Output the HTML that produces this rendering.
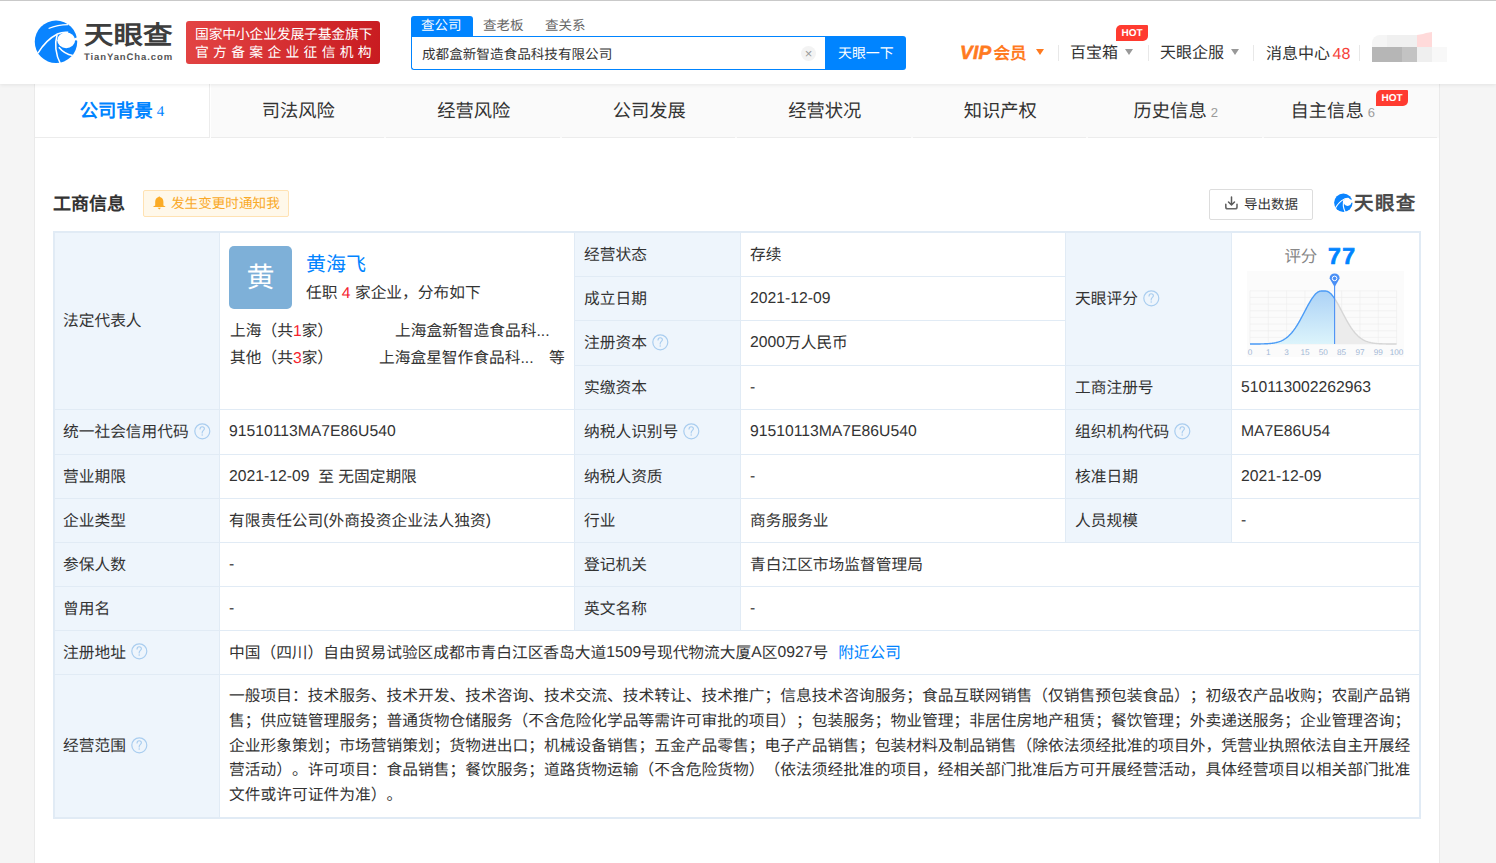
<!DOCTYPE html>
<html lang="zh-CN"><head><meta charset="utf-8">
<style>
*{box-sizing:border-box;margin:0;padding:0}
html,body{width:1496px;height:863px;overflow:hidden}
body{position:relative;text-rendering:geometricPrecision;text-spacing-trim:space-all;background:#f5f5f5;font-family:"Liberation Sans",sans-serif;color:#333}
.a{position:absolute;white-space:nowrap}
#hdr{position:absolute;left:0;top:0;width:1496px;height:84px;background:#fff;box-shadow:0 1px 4px rgba(0,0,0,.08);z-index:2}
#topline{position:absolute;left:0;top:0;width:1496px;height:1px;background:#c9c9c9;z-index:3}
#card{position:absolute;left:34px;top:84px;width:1406px;height:800px;background:#fff;border-left:1px solid #eaeaea;border-right:1px solid #eaeaea}
.tab{position:absolute;top:84px;height:54px;background:#fafafa;font-size:18.3px;padding-bottom:2px;color:#333;display:flex;align-items:center;justify-content:center}
.tab::after{content:"";position:absolute;left:0;right:2px;top:53px;height:1px;background:#ececec}
.tab.on{background:#fff;border-right:1px solid #ececec;color:#0084ff;font-weight:bold}
.tab.on::after{right:0}
.tab.on sup{color:#0084ff;font-family:"Liberation Serif",serif;font-size:15px}
.tab sup{font-size:13px;color:#999;font-weight:normal;margin-left:4px;vertical-align:baseline;position:relative;top:2px}
.hot{position:absolute;background:#ff3b30;color:#fff;font-size:10px;font-weight:bold;line-height:18px;text-align:center;border-radius:5px 1px 5px 0}
#tbl{position:absolute;left:53px;top:231px;width:1368px;height:588px;background:#e1ebf5}
.c{position:absolute;background:#fff;display:flex;align-items:center;padding-left:9px;font-size:15.72px;color:#333;white-space:nowrap}
.c.l{background:#eef5fc}
.k{position:relative;top:-1.5px}
.lt{position:relative;top:-2.2px}
.q{display:block;flex:none;margin-left:5px;position:relative;top:-1px}
</style></head><body>
<div id="topline"></div>
<div id="hdr">
  <!-- logo -->
  <svg class="a" style="left:30px;top:15px" width="55" height="55" viewBox="0 0 863 863">
    <circle cx="408" cy="421" r="333" fill="#0a84ff"/>
    <ellipse cx="568" cy="398" rx="140" ry="122" fill="#fff"/>
    <path d="M650,385 L790,330 L790,402 L735,402 Z" fill="#fff"/>
    <path d="M560,110 Q680,150 720,250 L760,250 L760,60 Z" fill="#fff"/>
    <path d="M125,598 Q250,390 430,298 Q510,262 600,272" stroke="#fff" stroke-width="24" fill="none"/>
    <path d="M292,212 Q430,152 600,150" stroke="#fff" stroke-width="20" fill="none"/>
    <path d="M425,310 Q360,540 480,770" stroke="#fff" stroke-width="24" fill="none"/>
    <path d="M452,505 Q540,612 670,636" stroke="#fff" stroke-width="24" fill="none"/>
  </svg>
  <div class="a" style="left:84px;top:18px;font-size:29.5px;font-weight:bold;color:#3d3d3d;line-height:34px;transform:scaleY(0.87);transform-origin:0 28px">天眼查</div>
  <div class="a" style="left:84px;top:52.5px;font-size:9.5px;font-weight:bold;color:#555;letter-spacing:0.9px;line-height:10px">TianYanCha.com</div>
  <div class="a" style="left:186px;top:21px;width:194px;height:43px;border-radius:3px;background:linear-gradient(100deg,#e34444,#c81b20)"></div>
  <div class="a" style="left:195px;top:25.5px;font-size:13.8px;letter-spacing:-0.16px;color:#fff;line-height:18px">国家中小企业发展子基金旗下</div>
  <div class="a" style="left:195px;top:44px;font-size:13.8px;color:#fff;line-height:18px;letter-spacing:4.3px">官方备案企业征信机构</div>

  <!-- search -->
  <div class="a" style="left:411px;top:16px;width:62px;height:21px;background:#0084ff;border-radius:3px 3px 0 0"></div>
  <div class="a" style="left:421px;top:17px;font-size:13.5px;color:#fff;line-height:18px">查公司</div>
  <div class="a" style="left:483px;top:17px;font-size:13.5px;color:#666;line-height:18px">查老板</div>
  <div class="a" style="left:545px;top:17px;font-size:13.5px;color:#666;line-height:18px">查关系</div>
  <div class="a" style="left:411px;top:36px;width:415px;height:34px;border:1px solid #0084ff;border-right:none;border-radius:0 0 0 3px;background:#fff"></div>
  <div class="a" style="left:422px;top:44.5px;font-size:13.6px;color:#333;line-height:20px">成都盒新智造食品科技有限公司</div>
  <div class="a" style="left:801px;top:46px;width:15px;height:15px;border-radius:50%;background:#f3f3f3;color:#999;font-size:13px;line-height:15px;text-align:center">×</div>
  <div class="a" style="left:825px;top:36px;width:81px;height:34px;background:#0084ff;border-radius:0 3px 3px 0"></div>
  <div class="a" style="left:838px;top:43px;font-size:13.9px;color:#fff;line-height:20px">天眼一下</div>

  <!-- right nav -->
  <div class="a" style="left:960px;top:42.5px;font-size:17px;color:#ff7a1f;font-weight:bold;line-height:22px"><i style="font-style:italic;font-size:19px;letter-spacing:0.3px;-webkit-text-stroke:0.6px #ff7a1f">VIP</i><span style="font-size:16.5px;margin-left:2px">会员</span></div>
  <div class="a" style="left:1036px;top:49px;width:0;height:0;border-left:4.5px solid transparent;border-right:4.5px solid transparent;border-top:6px solid #ff7a1f"></div>
  <div class="a" style="left:1058px;top:45px;width:1px;height:16px;background:#e8e8e8"></div>
  <div class="a" style="left:1070px;top:44px;font-size:16px;color:#333;line-height:20px">百宝箱</div>
  <div class="a" style="left:1125px;top:49px;width:0;height:0;border-left:4.5px solid transparent;border-right:4.5px solid transparent;border-top:6px solid #999"></div>
  <div class="hot" style="left:1116px;top:25px;width:32px;height:16px">HOT</div>
  <div class="a" style="left:1148px;top:45px;width:1px;height:16px;background:#e8e8e8"></div>
  <div class="a" style="left:1160px;top:44px;font-size:16px;color:#333;line-height:20px">天眼企服</div>
  <div class="a" style="left:1231px;top:49px;width:0;height:0;border-left:4.5px solid transparent;border-right:4.5px solid transparent;border-top:6px solid #999"></div>
  <div class="a" style="left:1253px;top:45px;width:1px;height:16px;background:#e8e8e8"></div>
  <div class="a" style="left:1266px;top:44.5px;font-size:16px;color:#333;line-height:20px">消息中心<span style="color:#f6423a;margin-left:2.5px">48</span></div>
  <div class="a" style="left:1359px;top:45px;width:1px;height:16px;background:#e8e8e8"></div>
  <!-- pixelated avatar -->
  <div class="a" style="left:1372px;top:35px;width:15px;height:12px;background:#f5f5f5;border-radius:8px 0 0 0"></div>
  <div class="a" style="left:1387px;top:35px;width:30px;height:12px;background:#f0f0f0"></div>
  <div class="a" style="left:1417px;top:32px;width:15px;height:15px;background:#ffdada;clip-path:polygon(0 3px,40% 2px,60% 1px,100% 0,100% 100%,0 100%)"></div>
  <div class="a" style="left:1372px;top:47px;width:30px;height:15px;background:#b6b6b6"></div>
  <div class="a" style="left:1402px;top:47px;width:15px;height:15px;background:#c3c3c3"></div>
  <div class="a" style="left:1417px;top:47px;width:15px;height:15px;background:#efefef"></div>
  <div class="a" style="left:1432px;top:47px;width:15px;height:15px;background:#f8f8f8"></div>
</div>

<div id="card"></div>
<!-- TABS -->
<div class="tab on" style="left:35px;width:175px">公司背景<sup>4</sup></div>
<div class="tab" style="left:210.5px;width:175.5px">司法风险</div>
<div class="tab" style="left:386.0px;width:175.5px">经营风险</div>
<div class="tab" style="left:561.5px;width:175.5px">公司发展</div>
<div class="tab" style="left:737.0px;width:175.5px">经营状况</div>
<div class="tab" style="left:912.5px;width:175.5px">知识产权</div>
<div class="tab" style="left:1088.0px;width:175.5px">历史信息<sup>2</sup></div>
<div class="tab" style="left:1263.5px;width:175.5px;padding-right:37px">自主信息<sup>6</sup></div>
<div class="hot" style="left:1376px;top:90px;width:32px;height:16px">HOT</div>
<div class="a" style="left:53px;top:191.3px;font-size:18px;font-weight:bold;color:#333;line-height:26px">工商信息</div>
<div class="a" style="left:143px;top:190px;width:146px;height:27px;background:#fff8ea;border:1px solid #ffe2b3;border-radius:2px"></div>
<svg class="a" style="left:153px;top:196px" width="13" height="14" viewBox="0 0 13 14"><path d="M6.2,0.2 L7,1 C9.3,1.6 10.4,3.5 10.4,5.8 L10.4,9.6 L12.3,10.4 L12.3,11 L0.3,11 L0.3,10.4 L2.2,9.6 L2.2,5.8 C2.2,3.5 3.3,1.6 5.5,1 Z" fill="#fbab25"/><path d="M4.6,11.8 L8,11.8 L6.3,13.6 Z" fill="#fbab25"/></svg>
<div class="a" style="left:171px;top:193.8px;font-size:13.6px;color:#f9a928;line-height:20px">发生变更时通知我</div>
<div class="a" style="left:1209px;top:189px;width:104px;height:31px;border:1px solid #ddd;border-radius:2px;background:#fff"></div>
<svg class="a" style="left:1224px;top:196px" width="14" height="14" viewBox="0 0 14 14"><path d="M7.5,1 L7.5,9 M4.5,6 L7.5,9 L10.5,6" stroke="#5a5a5a" stroke-width="1.5" fill="none" stroke-linecap="round"/><path d="M1.8,8.2 L1.8,11 Q1.8,12.8 3.6,12.8 L11.2,12.8 Q13,12.8 13,11 L13,8.2" stroke="#666" stroke-width="1.6" fill="none" stroke-linecap="round"/></svg>
<div class="a" style="left:1244px;top:194.7px;font-size:13.5px;color:#333;line-height:20px">导出数据</div>
<svg class="a" style="left:1332px;top:191px" width="24" height="24" viewBox="0 0 863 863">
    <circle cx="408" cy="422" r="332" fill="#0a84ff"/>
    <circle cx="560" cy="400" r="135" fill="#fff"/>
    <path d="M600,330 L760,300 L760,420 L640,420 Z" fill="#fff"/>
    <path d="M130,600 Q250,390 440,292 Q520,258 610,268" stroke="#fff" stroke-width="40" fill="none"/>
    <path d="M430,300 Q360,520 478,760" stroke="#fff" stroke-width="40" fill="none"/>
  </svg>
<div class="a" style="left:1354px;top:191px;font-size:19.5px;font-weight:bold;color:#4a4a4a;letter-spacing:1.4px;line-height:26px">天眼查</div>
<div id="tbl">
<div class="c l" style="left:2px;top:2px;width:164px;height:176px;padding-left:8px;"><span><span class="k">法定代表人</span></span></div>
<div class="c" style="left:167px;top:2px;width:354px;height:176px;padding:0"><div class="a" style="left:9px;top:13px;width:63px;height:63px;border-radius:5px;background:#7eb0d8;color:#fff;font-size:28px;line-height:63px;text-align:center">黄</div>
<div class="a" style="left:86px;top:19px;font-size:20px;color:#0084ff;line-height:26px">黄海飞</div>
<div class="a" style="left:86px;top:49.5px;font-size:15.72px;line-height:22px">任职 <span style="color:#f5222d">4</span> 家企业，分布如下</div>
<div class="a" style="left:10px;top:87.5px;font-size:15.72px;line-height:22px">上海（共<span style="color:#f5222d">1</span>家）</div>
<div class="a" style="left:175px;top:87.5px;font-size:15.72px;line-height:22px">上海盒新智造食品科...</div>
<div class="a" style="left:10px;top:114.5px;font-size:15.72px;line-height:22px">其他（共<span style="color:#f5222d">3</span>家）</div>
<div class="a" style="left:159px;top:114.5px;font-size:15.72px;line-height:22px">上海盒星智作食品科...</div>
<div class="a" style="left:329px;top:114.5px;font-size:15.72px;line-height:22px">等</div></div>
<div class="c l" style="left:522px;top:2px;width:165px;height:43px;"><span><span class="k">经营状态</span></span></div>
<div class="c" style="left:688px;top:2px;width:324px;height:43px;"><span><span class="k">存续</span></span></div>
<div class="c l" style="left:522px;top:46px;width:165px;height:43px;"><span><span class="k">成立日期</span></span></div>
<div class="c" style="left:688px;top:46px;width:324px;height:43px;"><span>2021-12-09</span></div>
<div class="c l" style="left:522px;top:90px;width:165px;height:44px;"><span><span class="k">注册资本</span></span><svg class="q" width="17" height="17" viewBox="0 0 17 17"><circle cx="8.3" cy="8.3" r="7.5" fill="none" stroke="#a9cdef" stroke-width="1.2"/><path d="M6,6.4 C6,4.6 7.1,3.7 8.2,3.7 C9.4,3.7 10.4,4.6 10.4,5.8 C10.4,7.3 8.2,7.7 8.2,9.6 L8.2,10.4" fill="none" stroke="#a9cdef" stroke-width="1.1"/><circle cx="8.2" cy="12.1" r="0.75" fill="#a9cdef"/></svg></div>
<div class="c" style="left:688px;top:90px;width:324px;height:44px;"><span><span class="lt">2000</span><span class="k">万人民币</span></span></div>
<div class="c l" style="left:522px;top:135px;width:165px;height:43px;"><span><span class="k">实缴资本</span></span></div>
<div class="c" style="left:688px;top:135px;width:324px;height:43px;"><span>-</span></div>
<div class="c l" style="left:1013px;top:2px;width:165px;height:132px;"><span><span class="k">天眼评分</span></span><svg class="q" width="17" height="17" viewBox="0 0 17 17"><circle cx="8.3" cy="8.3" r="7.5" fill="none" stroke="#a9cdef" stroke-width="1.2"/><path d="M6,6.4 C6,4.6 7.1,3.7 8.2,3.7 C9.4,3.7 10.4,4.6 10.4,5.8 C10.4,7.3 8.2,7.7 8.2,9.6 L8.2,10.4" fill="none" stroke="#a9cdef" stroke-width="1.1"/><circle cx="8.2" cy="12.1" r="0.75" fill="#a9cdef"/></svg></div>
<div class="c" style="left:1179px;top:2px;width:187px;height:132px;padding:0"></div>
<div class="c l" style="left:1013px;top:135px;width:165px;height:43px;"><span><span class="k">工商注册号</span></span></div>
<div class="c" style="left:1179px;top:135px;width:187px;height:43px;"><span>510113002262963</span></div>
<div class="c l" style="left:2px;top:179px;width:164px;height:44px;padding-left:8px;"><span><span class="k">统一社会信用代码</span></span><svg class="q" width="17" height="17" viewBox="0 0 17 17"><circle cx="8.3" cy="8.3" r="7.5" fill="none" stroke="#a9cdef" stroke-width="1.2"/><path d="M6,6.4 C6,4.6 7.1,3.7 8.2,3.7 C9.4,3.7 10.4,4.6 10.4,5.8 C10.4,7.3 8.2,7.7 8.2,9.6 L8.2,10.4" fill="none" stroke="#a9cdef" stroke-width="1.1"/><circle cx="8.2" cy="12.1" r="0.75" fill="#a9cdef"/></svg></div>
<div class="c" style="left:167px;top:179px;width:354px;height:44px;"><span>91510113MA7E86U540</span></div>
<div class="c l" style="left:522px;top:179px;width:165px;height:44px;"><span><span class="k">纳税人识别号</span></span><svg class="q" width="17" height="17" viewBox="0 0 17 17"><circle cx="8.3" cy="8.3" r="7.5" fill="none" stroke="#a9cdef" stroke-width="1.2"/><path d="M6,6.4 C6,4.6 7.1,3.7 8.2,3.7 C9.4,3.7 10.4,4.6 10.4,5.8 C10.4,7.3 8.2,7.7 8.2,9.6 L8.2,10.4" fill="none" stroke="#a9cdef" stroke-width="1.1"/><circle cx="8.2" cy="12.1" r="0.75" fill="#a9cdef"/></svg></div>
<div class="c" style="left:688px;top:179px;width:324px;height:44px;"><span>91510113MA7E86U540</span></div>
<div class="c l" style="left:1013px;top:179px;width:165px;height:44px;"><span><span class="k">组织机构代码</span></span><svg class="q" width="17" height="17" viewBox="0 0 17 17"><circle cx="8.3" cy="8.3" r="7.5" fill="none" stroke="#a9cdef" stroke-width="1.2"/><path d="M6,6.4 C6,4.6 7.1,3.7 8.2,3.7 C9.4,3.7 10.4,4.6 10.4,5.8 C10.4,7.3 8.2,7.7 8.2,9.6 L8.2,10.4" fill="none" stroke="#a9cdef" stroke-width="1.1"/><circle cx="8.2" cy="12.1" r="0.75" fill="#a9cdef"/></svg></div>
<div class="c" style="left:1179px;top:179px;width:187px;height:44px;"><span>MA7E86U54</span></div>
<div class="c l" style="left:2px;top:224px;width:164px;height:43px;padding-left:8px;"><span><span class="k">营业期限</span></span></div>
<div class="c" style="left:167px;top:224px;width:354px;height:43px;"><span><span class="lt">2021-12-09</span>&nbsp;&nbsp;<span class="k">至</span> <span class="k">无固定期限</span></span></div>
<div class="c l" style="left:522px;top:224px;width:165px;height:43px;"><span><span class="k">纳税人资质</span></span></div>
<div class="c" style="left:688px;top:224px;width:324px;height:43px;"><span>-</span></div>
<div class="c l" style="left:1013px;top:224px;width:165px;height:43px;"><span><span class="k">核准日期</span></span></div>
<div class="c" style="left:1179px;top:224px;width:187px;height:43px;"><span>2021-12-09</span></div>
<div class="c l" style="left:2px;top:268px;width:164px;height:43px;padding-left:8px;"><span><span class="k">企业类型</span></span></div>
<div class="c" style="left:167px;top:268px;width:354px;height:43px;"><span><span class="k">有限责任公司</span><span class="lt">(</span><span class="k">外商投资企业法人独资</span><span class="lt">)</span></span></div>
<div class="c l" style="left:522px;top:268px;width:165px;height:43px;"><span><span class="k">行业</span></span></div>
<div class="c" style="left:688px;top:268px;width:324px;height:43px;"><span><span class="k">商务服务业</span></span></div>
<div class="c l" style="left:1013px;top:268px;width:165px;height:43px;"><span><span class="k">人员规模</span></span></div>
<div class="c" style="left:1179px;top:268px;width:187px;height:43px;"><span>-</span></div>
<div class="c l" style="left:2px;top:312px;width:164px;height:43px;padding-left:8px;"><span><span class="k">参保人数</span></span></div>
<div class="c" style="left:167px;top:312px;width:354px;height:43px;"><span>-</span></div>
<div class="c l" style="left:522px;top:312px;width:165px;height:43px;"><span><span class="k">登记机关</span></span></div>
<div class="c" style="left:688px;top:312px;width:678px;height:43px;"><span><span class="k">青白江区市场监督管理局</span></span></div>
<div class="c l" style="left:2px;top:356px;width:164px;height:43px;padding-left:8px;"><span><span class="k">曾用名</span></span></div>
<div class="c" style="left:167px;top:356px;width:354px;height:43px;"><span>-</span></div>
<div class="c l" style="left:522px;top:356px;width:165px;height:43px;"><span><span class="k">英文名称</span></span></div>
<div class="c" style="left:688px;top:356px;width:678px;height:43px;"><span>-</span></div>
<div class="c l" style="left:2px;top:400px;width:164px;height:43px;padding-left:8px;"><span><span class="k">注册地址</span></span><svg class="q" width="17" height="17" viewBox="0 0 17 17"><circle cx="8.3" cy="8.3" r="7.5" fill="none" stroke="#a9cdef" stroke-width="1.2"/><path d="M6,6.4 C6,4.6 7.1,3.7 8.2,3.7 C9.4,3.7 10.4,4.6 10.4,5.8 C10.4,7.3 8.2,7.7 8.2,9.6 L8.2,10.4" fill="none" stroke="#a9cdef" stroke-width="1.1"/><circle cx="8.2" cy="12.1" r="0.75" fill="#a9cdef"/></svg></div>
<div class="c" style="left:167px;top:400px;width:1199px;height:43px;"><span><span class="k">中国（四川）自由贸易试验区成都市青白江区香岛大道</span><span class="lt">1509</span><span class="k">号现代物流大厦</span><span class="lt">A</span><span class="k">区</span><span class="lt">0927</span><span class="k">号</span><span style="color:#0084ff;margin-left:10px"><span class="k">附近公司</span></span></span></div>
<div class="c l" style="left:2px;top:444px;width:164px;height:142px;padding-left:8px;"><span><span class="k">经营范围</span></span><svg class="q" width="17" height="17" viewBox="0 0 17 17"><circle cx="8.3" cy="8.3" r="7.5" fill="none" stroke="#a9cdef" stroke-width="1.2"/><path d="M6,6.4 C6,4.6 7.1,3.7 8.2,3.7 C9.4,3.7 10.4,4.6 10.4,5.8 C10.4,7.3 8.2,7.7 8.2,9.6 L8.2,10.4" fill="none" stroke="#a9cdef" stroke-width="1.1"/><circle cx="8.2" cy="12.1" r="0.75" fill="#a9cdef"/></svg></div>
<div class="c" style="left:167px;top:444px;width:1199px;height:142px;"><div style="white-space:normal;width:1186px;font-size:15.75px;line-height:24.65px;position:relative;top:1px">一般项目：技术服务、技术开发、技术咨询、技术交流、技术转让、技术推广；信息技术咨询服务；食品互联网销售（仅销售预包装食品）；初级农产品收购；农副产品销售；供应链管理服务；普通货物仓储服务（不含危险化学品等需许可审批的项目）；包装服务；物业管理；非居住房地产租赁；餐饮管理；外卖递送服务；企业管理咨询；企业形象策划；市场营销策划；货物进出口；机械设备销售；五金产品零售；电子产品销售；包装材料及制品销售（除依法须经批准的项目外，凭营业执照依法自主开展经营活动）。许可项目：食品销售；餐饮服务；道路货物运输（不含危险货物）（依法须经批准的项目，经相关部门批准后方可开展经营活动，具体经营项目以相关部门批准文件或许可证件为准）。</div></div>
</div><!--/tbl-->
<!--score--><svg class="a" style="left:1232px;top:232px" width="188" height="133" viewBox="0 0 188 133">
<defs><linearGradient id="gb" x1="0" y1="0" x2="0" y2="1"><stop offset="0" stop-color="#acd2f6"/><stop offset="1" stop-color="#dcf4fb"/></linearGradient></defs>
<rect x="15" y="39" width="157" height="86" fill="#fbfbfb"/>
<g stroke="#ececec" stroke-width="0.6"><line x1="18.00" y1="58.80" x2="18.00" y2="112" /><line x1="36.32" y1="58.80" x2="36.32" y2="112" /><line x1="54.65" y1="58.80" x2="54.65" y2="112" /><line x1="72.97" y1="58.80" x2="72.97" y2="112" /><line x1="91.30" y1="58.80" x2="91.30" y2="112" /><line x1="109.62" y1="58.80" x2="109.62" y2="112" /><line x1="127.95" y1="58.80" x2="127.95" y2="112" /><line x1="146.27" y1="58.80" x2="146.27" y2="112" /><line x1="164.60" y1="58.80" x2="164.60" y2="112" /><line x1="18.00" y1="58.80" x2="164.60" y2="58.80" /><line x1="18.00" y1="65.45" x2="164.60" y2="65.45" /><line x1="18.00" y1="72.10" x2="164.60" y2="72.10" /><line x1="18.00" y1="78.75" x2="164.60" y2="78.75" /><line x1="18.00" y1="85.40" x2="164.60" y2="85.40" /><line x1="18.00" y1="92.05" x2="164.60" y2="92.05" /><line x1="18.00" y1="98.70" x2="164.60" y2="98.70" /><line x1="18.00" y1="105.35" x2="164.60" y2="105.35" /><line x1="18.00" y1="112.00" x2="164.60" y2="112.00" /></g>
<path d="M18.00,111.99 L18.73,111.99 L19.47,111.99 L20.20,111.99 L20.93,111.99 L21.66,111.98 L22.40,111.98 L23.13,111.98 L23.86,111.97 L24.60,111.97 L25.33,111.96 L26.06,111.96 L26.80,111.95 L27.53,111.94 L28.26,111.93 L28.99,111.92 L29.73,111.90 L30.46,111.89 L31.19,111.87 L31.93,111.84 L32.66,111.82 L33.39,111.79 L34.13,111.76 L34.86,111.72 L35.59,111.68 L36.32,111.63 L37.06,111.58 L37.79,111.52 L38.52,111.45 L39.26,111.37 L39.99,111.29 L40.72,111.19 L41.46,111.08 L42.19,110.96 L42.92,110.83 L43.65,110.68 L44.39,110.51 L45.12,110.33 L45.85,110.13 L46.59,109.91 L47.32,109.66 L48.05,109.40 L48.79,109.11 L49.52,108.79 L50.25,108.44 L50.98,108.07 L51.72,107.66 L52.45,107.22 L53.18,106.74 L53.92,106.23 L54.65,105.68 L55.38,105.09 L56.12,104.47 L56.85,103.80 L57.58,103.08 L58.31,102.33 L59.05,101.52 L59.78,100.68 L60.51,99.79 L61.25,98.85 L61.98,97.87 L62.71,96.85 L63.45,95.78 L64.18,94.67 L64.91,93.52 L65.64,92.33 L66.38,91.11 L67.11,89.84 L67.84,88.55 L68.58,87.23 L69.31,85.89 L70.04,84.52 L70.78,83.14 L71.51,81.75 L72.24,80.35 L72.97,78.95 L73.71,77.55 L74.44,76.16 L75.17,74.78 L75.91,73.43 L76.64,72.10 L77.37,70.81 L78.11,69.55 L78.84,68.34 L79.57,67.18 L80.30,66.08 L81.04,65.04 L81.77,64.06 L82.50,63.16 L83.24,62.34 L83.97,61.60 L84.70,60.95 L85.44,60.38 L86.17,59.91 L86.90,59.54 L87.63,59.26 L88.37,59.08 L89.10,59.00 L89.83,59.00 L90.57,59.00 L91.30,59.00 L92.03,59.00 L92.77,59.00 L93.50,59.00 L94.23,59.08 L94.96,59.26 L95.70,59.54 L96.43,59.91 L97.16,60.38 L97.90,60.95 L98.63,61.60 L99.36,62.34 L100.10,63.16 L100.83,64.06 L101.56,65.04 L102.29,66.08 L102.60,66.53 L102.60,112 L18.00,112 Z" fill="url(#gb)"/>
<path d="M102.60,66.53 L103.03,67.18 L103.76,68.34 L104.49,69.55 L105.23,70.81 L105.96,72.10 L106.69,73.43 L107.43,74.78 L108.16,76.16 L108.89,77.55 L109.62,78.95 L110.36,80.35 L111.09,81.75 L111.82,83.14 L112.56,84.52 L113.29,85.89 L114.02,87.23 L114.76,88.55 L115.49,89.84 L116.22,91.11 L116.95,92.33 L117.69,93.52 L118.42,94.67 L119.15,95.78 L119.89,96.85 L120.62,97.87 L121.35,98.85 L122.09,99.79 L122.82,100.68 L123.55,101.52 L124.28,102.33 L125.02,103.08 L125.75,103.80 L126.48,104.47 L127.22,105.09 L127.95,105.68 L128.68,106.23 L129.42,106.74 L130.15,107.22 L130.88,107.66 L131.61,108.07 L132.35,108.44 L133.08,108.79 L133.81,109.11 L134.55,109.40 L135.28,109.66 L136.01,109.91 L136.75,110.13 L137.48,110.33 L138.21,110.51 L138.94,110.68 L139.68,110.83 L140.41,110.96 L141.14,111.08 L141.88,111.19 L142.61,111.29 L143.34,111.37 L144.08,111.45 L144.81,111.52 L145.54,111.58 L146.27,111.63 L147.01,111.68 L147.74,111.72 L148.47,111.76 L149.21,111.79 L149.94,111.82 L150.67,111.84 L151.41,111.87 L152.14,111.89 L152.87,111.90 L153.60,111.92 L154.34,111.93 L155.07,111.94 L155.80,111.95 L156.54,111.96 L157.27,111.96 L158.00,111.97 L158.74,111.97 L159.47,111.98 L160.20,111.98 L160.93,111.98 L161.67,111.99 L162.40,111.99 L163.13,111.99 L163.87,111.99 L164.60,111.99 L164.60,112 L102.60,112 Z" fill="#ececec"/>
<path d="M102.60,66.53 L103.03,67.18 L103.76,68.34 L104.49,69.55 L105.23,70.81 L105.96,72.10 L106.69,73.43 L107.43,74.78 L108.16,76.16 L108.89,77.55 L109.62,78.95 L110.36,80.35 L111.09,81.75 L111.82,83.14 L112.56,84.52 L113.29,85.89 L114.02,87.23 L114.76,88.55 L115.49,89.84 L116.22,91.11 L116.95,92.33 L117.69,93.52 L118.42,94.67 L119.15,95.78 L119.89,96.85 L120.62,97.87 L121.35,98.85 L122.09,99.79 L122.82,100.68 L123.55,101.52 L124.28,102.33 L125.02,103.08 L125.75,103.80 L126.48,104.47 L127.22,105.09 L127.95,105.68 L128.68,106.23 L129.42,106.74 L130.15,107.22 L130.88,107.66 L131.61,108.07 L132.35,108.44 L133.08,108.79 L133.81,109.11 L134.55,109.40 L135.28,109.66 L136.01,109.91 L136.75,110.13 L137.48,110.33 L138.21,110.51 L138.94,110.68 L139.68,110.83 L140.41,110.96 L141.14,111.08 L141.88,111.19 L142.61,111.29 L143.34,111.37 L144.08,111.45 L144.81,111.52 L145.54,111.58 L146.27,111.63 L147.01,111.68 L147.74,111.72 L148.47,111.76 L149.21,111.79 L149.94,111.82 L150.67,111.84 L151.41,111.87 L152.14,111.89 L152.87,111.90 L153.60,111.92 L154.34,111.93 L155.07,111.94 L155.80,111.95 L156.54,111.96 L157.27,111.96 L158.00,111.97 L158.74,111.97 L159.47,111.98 L160.20,111.98 L160.93,111.98 L161.67,111.99 L162.40,111.99 L163.13,111.99 L163.87,111.99 L164.60,111.99" stroke="#d6d6d6" stroke-width="1.4" fill="none"/>
<path d="M18.00,111.99 L18.73,111.99 L19.47,111.99 L20.20,111.99 L20.93,111.99 L21.66,111.98 L22.40,111.98 L23.13,111.98 L23.86,111.97 L24.60,111.97 L25.33,111.96 L26.06,111.96 L26.80,111.95 L27.53,111.94 L28.26,111.93 L28.99,111.92 L29.73,111.90 L30.46,111.89 L31.19,111.87 L31.93,111.84 L32.66,111.82 L33.39,111.79 L34.13,111.76 L34.86,111.72 L35.59,111.68 L36.32,111.63 L37.06,111.58 L37.79,111.52 L38.52,111.45 L39.26,111.37 L39.99,111.29 L40.72,111.19 L41.46,111.08 L42.19,110.96 L42.92,110.83 L43.65,110.68 L44.39,110.51 L45.12,110.33 L45.85,110.13 L46.59,109.91 L47.32,109.66 L48.05,109.40 L48.79,109.11 L49.52,108.79 L50.25,108.44 L50.98,108.07 L51.72,107.66 L52.45,107.22 L53.18,106.74 L53.92,106.23 L54.65,105.68 L55.38,105.09 L56.12,104.47 L56.85,103.80 L57.58,103.08 L58.31,102.33 L59.05,101.52 L59.78,100.68 L60.51,99.79 L61.25,98.85 L61.98,97.87 L62.71,96.85 L63.45,95.78 L64.18,94.67 L64.91,93.52 L65.64,92.33 L66.38,91.11 L67.11,89.84 L67.84,88.55 L68.58,87.23 L69.31,85.89 L70.04,84.52 L70.78,83.14 L71.51,81.75 L72.24,80.35 L72.97,78.95 L73.71,77.55 L74.44,76.16 L75.17,74.78 L75.91,73.43 L76.64,72.10 L77.37,70.81 L78.11,69.55 L78.84,68.34 L79.57,67.18 L80.30,66.08 L81.04,65.04 L81.77,64.06 L82.50,63.16 L83.24,62.34 L83.97,61.60 L84.70,60.95 L85.44,60.38 L86.17,59.91 L86.90,59.54 L87.63,59.26 L88.37,59.08 L89.10,59.00 L89.83,59.00 L90.57,59.00 L91.30,59.00 L92.03,59.00 L92.77,59.00 L93.50,59.00 L94.23,59.08 L94.96,59.26 L95.70,59.54 L96.43,59.91 L97.16,60.38 L97.90,60.95 L98.63,61.60 L99.36,62.34 L100.10,63.16 L100.83,64.06 L101.56,65.04 L102.29,66.08 L102.60,66.53" stroke="#4b9bf6" stroke-width="1.4" fill="none"/>
<line x1="102.60" y1="50" x2="102.60" y2="112" stroke="#4a90f5" stroke-width="1.1"/>
<path d="M97.60,46.4 A5,5 0 1 1 107.60,46.4 L102.60,55 Z" fill="#4a8ff5"/>
<circle cx="102.60" cy="46.4" r="2.3" fill="none" stroke="#fff" stroke-width="1"/>
<g fill="#a3b8d6" font-size="8.2" text-anchor="middle" font-family="Liberation Sans, sans-serif"><text x="18.00" y="122.8">0</text><text x="36.32" y="122.8">1</text><text x="54.65" y="122.8">3</text><text x="72.97" y="122.8">15</text><text x="91.30" y="122.8">50</text><text x="109.62" y="122.8">85</text><text x="127.95" y="122.8">97</text><text x="146.27" y="122.8">99</text><text x="164.60" y="122.8">100</text></g>
<text x="52.5" y="29.5" font-size="16.5" letter-spacing="-0.3" fill="#888" font-family="Liberation Sans, sans-serif">评分</text>
<text x="96" y="31.5" font-size="23" letter-spacing="1.5" font-weight="bold" fill="#0084ff" stroke="#0084ff" stroke-width="0.7" font-family="Liberation Sans, sans-serif">77</text>
</svg><!--/score-->
</body></html>
